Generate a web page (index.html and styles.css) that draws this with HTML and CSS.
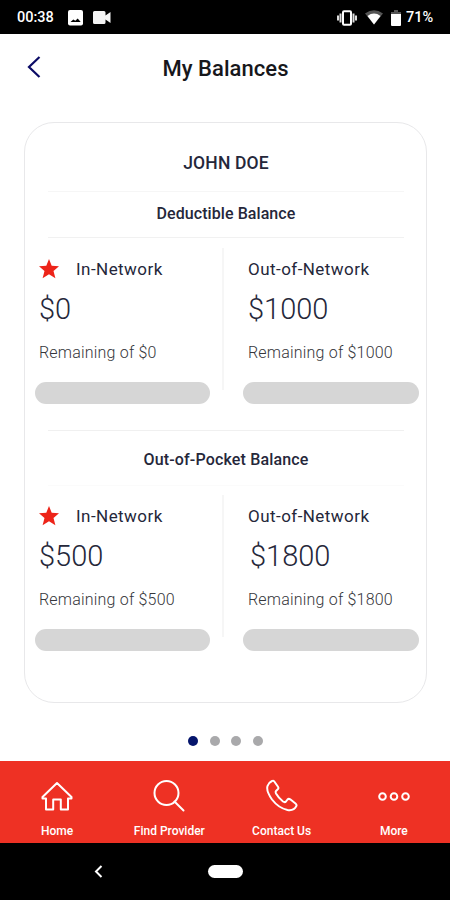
FILE: index.html
```html
<!DOCTYPE html>
<html lang="en">
<head>
<meta charset="utf-8">
<title>My Balances</title>
<link rel="stylesheet" href="styles.css">
</head>
<body>
<div class="screen">
  <div class="status">
    <span class="time">00:38</span>
    <svg class="s-image" width="15" height="16" viewBox="0 0 15 16"><rect width="15" height="15.5" rx="2" fill="#fff"/><path d="M2.500 12l2.800-2.400 2 1.200 2.400-2.300 3 3.500z" fill="#000"/></svg>
    <svg class="s-video" width="18" height="13" viewBox="0 0 18 13"><path d="M1.500 0H11q1.500 0 1.500 1.500V4.500L17.500 1V12L12.500 8.500V11.500Q12.500 13 11 13H1.500Q0 13 0 11.500V1.500Q0 0 1.500 0z" fill="#f4f4f4"/></svg>
    <svg class="s-vibrate" width="20" height="16" viewBox="0 0 20 16"><rect x="6" y="1.200" width="8" height="13.600" rx="1" fill="none" stroke="#fff" stroke-width="2"/><path d="M3.500 3.500v9M16.500 3.500v9M1 5.500v5M19 5.500v5" stroke="#ddd" stroke-width="2"/></svg>
    <svg class="s-wifi" width="18" height="15" viewBox="0 0 18 15"><path d="M0 3.600Q9-3 18 3.600L9 14.500z" fill="#555"/><path d="M2.500 6Q9 1.200 15.500 6L9 14.500z" fill="#fff"/></svg>
    <svg class="s-battery" width="10" height="16" viewBox="0 0 10 16"><path d="M0 4V2h3V0h4v2h3v2z" fill="#555"/><path d="M0 4h10v11q0 1-1 1H1q-1 0-1-1z" fill="#fff"/></svg>
    <span class="percent">71%</span>
  </div>
  <header class="header">
    <svg class="back" width="14" height="23" viewBox="0 0 14 23"><path d="M12.500 1L2 11 12.500 21" fill="none" stroke="#0b0b66" stroke-width="2.200"/></svg>
    <h1>My Balances</h1>
  </header>
  <main class="card">
    <div class="name">JOHN DOE</div>
    <section class="section">
      <h2 class="deductible">Deductible Balance</h2>
      <div class="columns">
        <div class="col in">
          <div class="label"><svg class="star" width="20" height="20" viewBox="0 0 20 20"><path d="M10 0l2.700 6.700 7.300.500-5.500 4.700 1.900 7.400L10 15.300l-6.400 4 1.900-7.400L0 7.200l7.300-.500z" fill="#ed2419"/></svg><span>In-Network</span></div>
          <div class="amount">$0</div>
          <div class="remaining">Remaining of $0</div>
          <div class="bar"></div>
        </div>
        <div class="divider"></div>
        <div class="col out">
          <div class="label"><span>Out-of-Network</span></div>
          <div class="amount">$1000</div>
          <div class="remaining">Remaining of $1000</div>
          <div class="bar"></div>
        </div>
      </div>
    </section>
    <section class="section pocket">
      <h2>Out-of-Pocket Balance</h2>
      <div class="columns">
        <div class="col in">
          <div class="label"><svg class="star" width="20" height="20" viewBox="0 0 20 20"><path d="M10 0l2.700 6.700 7.300.500-5.500 4.700 1.900 7.400L10 15.300l-6.400 4 1.900-7.400L0 7.200l7.300-.500z" fill="#ed2419"/></svg><span>In-Network</span></div>
          <div class="amount">$500</div>
          <div class="remaining">Remaining of $500</div>
          <div class="bar"></div>
        </div>
        <div class="divider"></div>
        <div class="col out">
          <div class="label"><span>Out-of-Network</span></div>
          <div class="amount">$1800</div>
          <div class="remaining">Remaining of $1800</div>
          <div class="bar"></div>
        </div>
      </div>
    </section>
  </main>
  <div class="dots"><i class="active"></i><i></i><i></i><i></i></div>
  <nav class="tabs">
    <a><svg width="34" height="34" viewBox="0 0 34 34"><path d="M2.500 18L17 4l14.500 14v1.500H28V30.500H20.800V20.500H13.200V30.500H6V19.500H2.500z"/></svg><span>Home</span></a>
    <a><svg width="34" height="34" viewBox="0 0 34 34"><circle cx="14.500" cy="14" r="12"/><path d="M22.500 22.500L31.500 31.500"/></svg><span>Find Provider</span></a>
    <a><svg width="34" height="34" viewBox="0 0 34 34"><path d="M7 2Q8.300 1.200 9.300 2.500L13 7.800Q14 9.300 12.500 10.500L11 12Q10.300 13 11 14.500 13.600 19 18 22.500 19.700 23.700 21 22.500L22.500 20.500Q23.700 19.300 25.200 20.300L30.500 24.500Q32 25.700 31.300 27.200 29 32 22.500 31 13.500 29 7 20.500 1 12 2.500 7 3.500 3.700 7 2z"/></svg><span>Contact Us</span></a>
    <a><svg width="34" height="34" viewBox="0 0 34 34"><circle cx="5.500" cy="17.500" r="3.300"/><circle cx="17" cy="17.500" r="3.300"/><circle cx="28.500" cy="17.500" r="3.300"/></svg><span>More</span></a>
  </nav>
  <div class="system">
    <svg class="sys-back" width="9" height="13" viewBox="0 0 9 13"><path d="M7.500 1L2 6.500 7.500 12" fill="none" stroke="#fff" stroke-width="2"/></svg>
    <div class="pill"></div>
  </div>
</div>
</body>
</html>
```
FILE: styles.css
```css
* { box-sizing: border-box; }
body { margin: 0; font-family: Roboto, "Liberation Sans", sans-serif; background: #fff; color: #25273a; }
svg { display: block; flex: none; }
h1, h2 { margin: 0; }
.screen { width: 450px; height: 900px; display: flex; flex-direction: column; overflow: hidden; }

.status { height: 34px; flex: none; background: #000; color: #fff; display: flex; align-items: center; padding: 1px 17px 0 17px; font-size: 14.500px; font-weight: 500; }
.time { width: 51px; }
.s-video { margin-left: 10px; }
.s-vibrate { margin-left: auto; }
.s-wifi { margin-left: 8px; }
.s-battery { margin-left: 8px; }
.percent { width: 27px; margin-left: 5px; white-space: nowrap; }

.header { height: 88px; flex: none; display: grid; grid-template-columns: 28px 1fr 28px; align-items: start; padding: 22px 26px 0 27px; }
.header h1 { text-align: center; font-size: 22px; line-height: 26px; font-weight: 500; letter-spacing: .05px; color: #17171b; }

.card { margin: 0 23px 0 24px; height: 581px; flex: none; border: 1px solid #e8e8ea; border-radius: 30px; }
.name { height: 69px; margin: 0 22px 0 23px; padding-top: 13px; line-height: 54px; text-align: center; font-size: 17.500px; font-weight: 500; letter-spacing: .15px; border-bottom: 1px solid #f6f6f6; }
.section { height: 247px; }
.section h2 { height: 46px; margin: 0 22px 0 23px; line-height: 43px; text-align: center; font-size: 16px; font-weight: 500; letter-spacing: .07px; border-bottom: 1px solid #f1f1f1; }
.pocket { margin-top: -9px; }
.section.pocket h2 { height: 56px; line-height: 58px; letter-spacing: .16px; border-top: 1px solid #f0f0f0; border-bottom-color: #fbfbfb; }
.columns { display: flex; }
.divider { width: 2px; height: 142px; margin-top: 10px; background: #f6f6f6; }
.col { padding-top: 19px; }
.pocket .col { padding-top: 18px; }
.pocket .divider { margin-top: 9px; }
.in { width: 197px; padding-left: 10px; }
.out { width: 195px; padding-left: 19px; }
.label { height: 24px; display: flex; align-items: center; padding-left: 4px; font-size: 17px; letter-spacing: .45px; }
.star { margin-right: 17px; }
.out .label { padding-left: 5px; }
.amount { height: 36px; margin-top: 10px; padding-left: 4px; line-height: 36px; font-size: 29px; font-weight: 300; }
.out .amount { padding-left: 5px; }
.pocket .out .amount { padding-left: 7px; }
.remaining { height: 20px; margin-top: 15px; padding-left: 4px; line-height: 21px; font-size: 16px; font-weight: 300; letter-spacing: .2px; color: #35363b; white-space: nowrap; }
.out .remaining { padding-left: 5px; }
.bar { width: 176px; height: 22px; margin-top: 20px; border-radius: 11px; background: #d6d6d6; }
.in .bar { width: 175px; }

.dots { height: 58px; flex: none; display: flex; justify-content: center; align-items: center; gap: 11.700px; padding: 18px 0 0 1px; }
.dots i { width: 10px; height: 10px; border-radius: 50%; background: #a9a9ab; }
.dots .active { background: #05156c; }

.tabs { height: 82px; flex: none; background: #ee3124; display: grid; grid-template-columns: repeat(4, 1fr); color: #fff; padding-left: 1px; }
.tabs a { display: flex; flex-direction: column; align-items: center; padding-top: 18px; font-size: 12px; font-weight: 500; line-height: 14px; }
.tabs svg { fill: none; stroke: #fff; stroke-width: 2; stroke-linejoin: round; stroke-linecap: round; }
.tabs span { margin-top: 11px; }

.system { flex: 1; background: #000; display: flex; align-items: center; padding-left: 94px; }
.pill { width: 35px; height: 13px; margin-left: 105px; border-radius: 7px; background: #fff; }
```
